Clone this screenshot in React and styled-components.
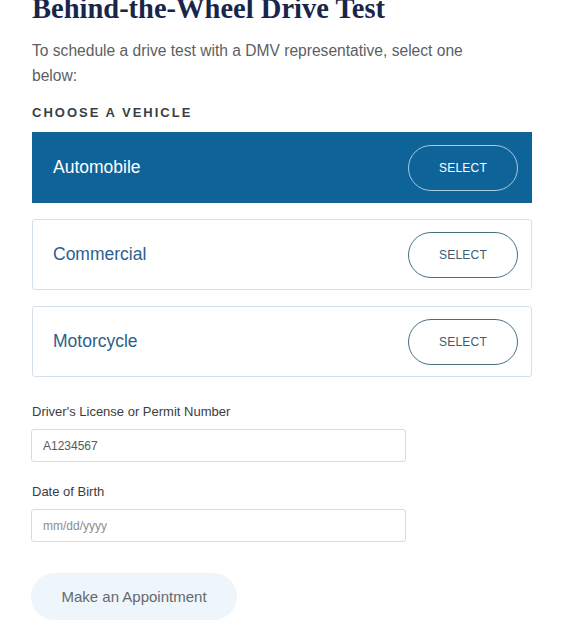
import styled, { createGlobalStyle, css } from "styled-components";

const GlobalStyle = createGlobalStyle`
  body {
    margin: 0;
    background: #ffffff;
    font-family: "Liberation Sans", Arial, sans-serif;
  }
`;

const vehicles = ["Automobile", "Commercial", "Motorcycle"];

export default function App() {
  const selected = "Automobile";

  return (
    <Page>
      <GlobalStyle />
      <Title>Behind-the-Wheel Drive Test</Title>
      <Intro>
        To schedule a drive test with a DMV representative, select one below:
      </Intro>
      <SectionLabel>Choose a vehicle</SectionLabel>

      <CardList>
        {vehicles.map((name) => (
          <VehicleCard key={name} $active={name === selected}>
            <VehicleName $active={name === selected}>{name}</VehicleName>
            <SelectButton $active={name === selected}>Select</SelectButton>
          </VehicleCard>
        ))}
      </CardList>

      <Form>
        <Field>
          <FieldLabel>Driver's License or Permit Number</FieldLabel>
          <TextInput type="text" defaultValue="A1234567" />
        </Field>
        <Field>
          <FieldLabel>Date of Birth</FieldLabel>
          <TextInput type="text" placeholder="mm/dd/yyyy" />
        </Field>
        <SubmitButton>Make an Appointment</SubmitButton>
      </Form>
    </Page>
  );
}

const Page = styled.main`
  padding: 0 41px 0 32px;
  width: 500px;
  overflow: hidden;
`;

const Title = styled.h1`
  margin: -8px 0 0;
  font-family: "Liberation Serif", "Times New Roman", serif;
  font-size: 28.5px;
  line-height: 33px;
  font-weight: 700;
  color: #17264a;
`;

const Intro = styled.p`
  margin: 13px 0 0;
  font-size: 15.6px;
  line-height: 25px;
  color: #5c5f63;
  width: 445px;
`;

const SectionLabel = styled.h2`
  margin: 17px 0 0;
  font-size: 13px;
  line-height: 16px;
  font-weight: 700;
  letter-spacing: 2px;
  text-transform: uppercase;
  color: #3b3f45;
`;

const CardList = styled.div`
  margin-top: 11px;
  display: flex;
  flex-direction: column;
  gap: 16px;
`;

const VehicleCard = styled.div`
  height: 71px;
  box-sizing: border-box;
  display: flex;
  align-items: center;
  justify-content: space-between;
  padding: 0 13px 0 20px;
  border-radius: 3px;
  border: 1px solid #d4e1ea;
  background: #ffffff;

  ${({ $active }) =>
    $active &&
    css`
      background: #0e6399;
      border-color: #0e6399;
      border-radius: 0;
    `}
`;

const VehicleName = styled.span`
  font-size: 17.5px;
  color: ${({ $active }) => ($active ? "#ffffff" : "#2c5f8e")};
`;

const SelectButton = styled.button`
  width: 110px;
  height: 46px;
  border-radius: 23px;
  background: transparent;
  font-family: inherit;
  font-size: 12px;
  letter-spacing: 0.2px;
  text-transform: uppercase;
  cursor: pointer;
  border: 1px solid ${({ $active }) => ($active ? "#a9cbe2" : "#46707f")};
  color: ${({ $active }) => ($active ? "#ffffff" : "#3d5b70")};
`;

const Form = styled.form`
  margin-top: 27px;
  display: flex;
  flex-direction: column;
  align-items: flex-start;
  gap: 22px;
`;

const Field = styled.div`
  display: flex;
  flex-direction: column;
  gap: 10px;
`;

const FieldLabel = styled.label`
  font-size: 13px;
  line-height: 15px;
  color: #3a3d42;
`;

const TextInput = styled.input`
  width: 375px;
  height: 33px;
  box-sizing: border-box;
  margin-left: -1px;
  padding: 0 11px;
  border: 1px solid #d8dadc;
  border-radius: 3px;
  font-family: inherit;
  font-size: 12px;
  color: #55595e;
  outline: none;

  &::placeholder {
    color: #8a8d91;
  }
`;

const SubmitButton = styled.button`
  margin: 9px 0 0 -1px;
  width: 206px;
  height: 47px;
  border: none;
  border-radius: 24px;
  background: #eef6fc;
  font-family: inherit;
  font-size: 15px;
  color: #65686c;
  cursor: pointer;
`;
